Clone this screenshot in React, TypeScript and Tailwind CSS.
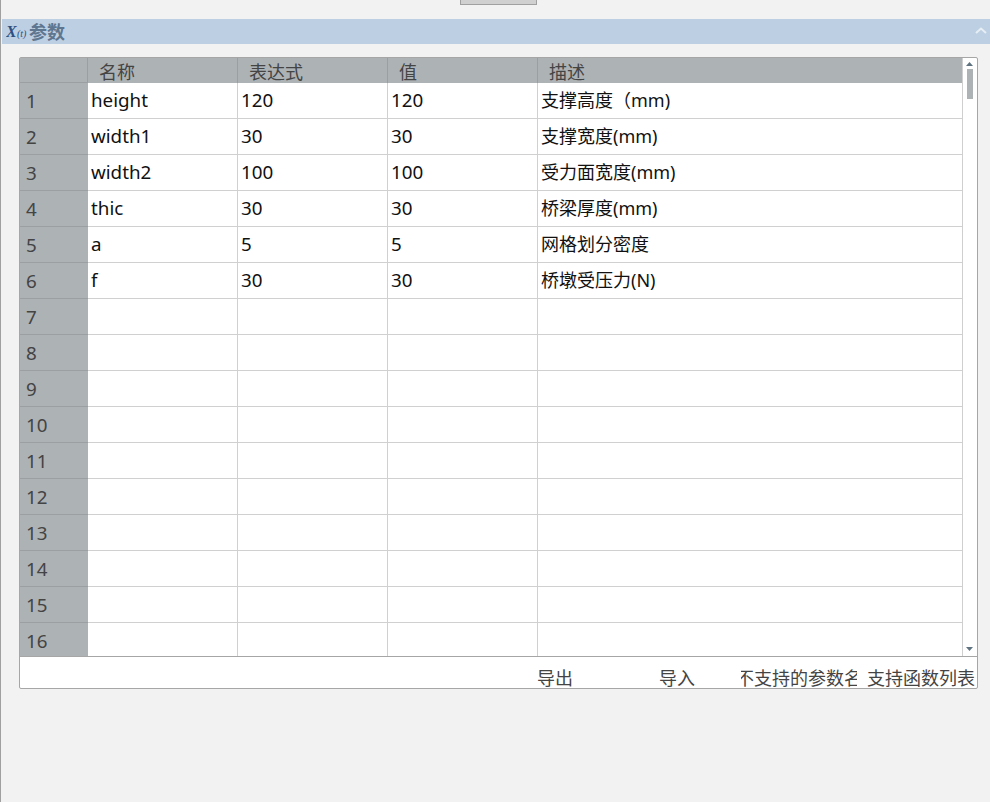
const FONT = "font-['Noto_Sans','Noto_Sans_CJK_SC',sans-serif]";

const data: string[][] = [
  ["height", "120", "120", "支撑高度（mm)"],
  ["width1", "30", "30", "支撑宽度(mm)"],
  ["width2", "100", "100", "受力面宽度(mm)"],
  ["thic", "30", "30", "桥梁厚度(mm)"],
  ["a", "5", "5", "网格划分密度"],
  ["f", "30", "30", "桥墩受压力(N)"],
];
const rows = Array.from({ length: 16 }, (_, i) => data[i] ?? ["", "", "", ""]);

function Cell({ text, wide }: { text: string; wide?: boolean }) {
  return (
    <div
      className={`${wide ? "flex-1 min-w-0 text-[18px]" : "w-[150px] border-r border-[#d0d0d0] text-[18.8px]"} h-full pl-[3px] flex items-center leading-none text-[#111111] pb-[1px] whitespace-nowrap`}
    >
      {text}
    </div>
  );
}

function FooterButton({ label, className }: { label: string; className: string }) {
  return (
    <div className={`${className} h-[24px] overflow-hidden flex justify-center whitespace-nowrap text-[18px] leading-[28px] text-[#444444]`}>
      {label}
    </div>
  );
}

export default function App() {
  return (
    <div className={`${FONT} w-[990px] h-[802px] bg-[#f2f2f2] border-l border-[#a0a0a0] overflow-hidden flex flex-col`}>
      <div className="h-[19px] flex justify-center shrink-0">
        <div className="ml-[6px] w-[77px] h-[5px] bg-[#d0d0d0] border border-t-0 border-[#a0a0a0]" />
      </div>
      <div className="h-[25px] ml-[1px] bg-[#bdd0e3] flex items-center pl-[4px] pr-[2px] shrink-0">
        <svg width="22" height="16" viewBox="0 0 22 16" className="shrink-0">
          <text x="0" y="13" fontFamily="Liberation Serif" fontStyle="italic" fontWeight="700" fontSize="16" fill="#2f4f80">X</text>
          <text x="11" y="13" fontFamily="Liberation Serif" fontStyle="italic" fontSize="10" fill="#2f4f80">(t)</text>
        </svg>
        <span className="ml-[1px] text-[18px] font-bold text-[#5f7690] leading-none">参数</span>
        <svg width="12" height="7" viewBox="0 0 12 7" className="ml-auto mr-[1px] mb-[2px]">
          <path d="M1 6 L6 1.5 L11 6" fill="none" stroke="#e6edf4" strokeWidth="2" />
        </svg>
      </div>
      <div className="mt-[13px] ml-[18px] w-[959px] h-[632px] bg-white border border-[#a6a6a6] rounded-[2px] flex flex-col shrink-0">
        <div className="h-[599px] flex border-b border-[#a6a6a6] shrink-0">
          <div className="w-[943px] flex flex-col overflow-hidden">
            <div className="h-[25px] bg-[#adb2b5] flex shrink-0 text-[18px] leading-none text-[#444444]">
              <div className="w-[68px] border-r border-b border-[#9c9fa2]" />
              {["名称", "表达式", "值"].map((h) => (
                <div key={h} className="w-[150px] border-r border-[#9c9fa2] pl-[11px] flex items-center pt-[3px]">{h}</div>
              ))}
              <div className="flex-1 pl-[11px] flex items-center pt-[3px]">描述</div>
            </div>
            {rows.map((r, i) => (
              <div key={i} className="h-[36px] flex shrink-0">
                <div className="w-[68px] bg-[#adb2b5] border-b border-[#9c9fa2] pl-[6px] pt-[2px] flex items-center text-[18.8px] leading-none text-[#444444]">{i + 1}</div>
                <div className="flex-1 flex h-full border-b border-[#d0d0d0]">
                  <Cell text={r[0]} />
                  <Cell text={r[1]} />
                  <Cell text={r[2]} />
                  <Cell text={r[3]} wide />
                </div>
              </div>
            ))}
          </div>
          <div className="w-[14px] -ml-[1px] border-l border-[#cfcfcf] bg-white flex flex-col items-center pt-[4px]">
            <svg width="7" height="4" viewBox="0 0 7 4"><path d="M3.5 0 L7 4 L0 4 Z" fill="#5f7280" /></svg>
            <div className="mt-[3px] w-[6px] h-[30px] bg-[#adb2b5]" />
            <svg width="7" height="4" viewBox="0 0 7 4" className="mt-auto mb-[5px]"><path d="M0 0 L7 0 L3.5 4 Z" fill="#5f7280" /></svg>
          </div>
        </div>
        <div className="flex-1 flex items-end min-h-0 overflow-hidden">
          <div className="w-[517px] shrink-0" />
          <FooterButton label="导出" className="w-[36px]" />
          <FooterButton label="导入" className="ml-[86px] w-[36px]" />
          <FooterButton label="不支持的参数名" className="ml-[46px] w-[116px]" />
          <FooterButton label="支持函数列表" className="ml-[10px] w-[108px]" />
        </div>
      </div>
    </div>
  );
}
